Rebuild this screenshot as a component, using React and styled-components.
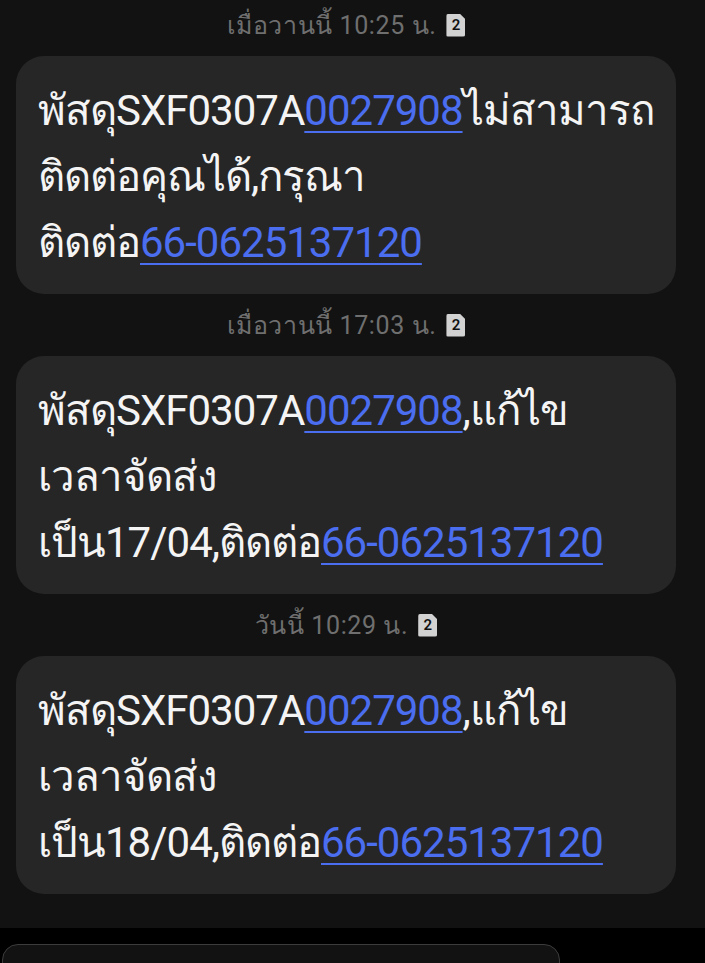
import React from "react";
import styled, { createGlobalStyle } from "styled-components";

const Global = createGlobalStyle`
  html, body { margin: 0; padding: 0; background: #000; }
  body { width: 705px; height: 963px; overflow: hidden; font-family: Roboto, "Noto Sans", "DejaVu Sans", sans-serif; }
`;

const Screen = styled.div`
  width: 705px;
  height: 963px;
  display: flex;
  flex-direction: column;
  background: #000;
  overflow: hidden;
`;

const Thread = styled.div`
  background: #121212;
  height: 928px;
  flex-shrink: 0;
  padding: 8px 29px 0 16px;
  box-sizing: border-box;
  display: flex;
  flex-direction: column;
`;

const Stamp = styled.div`
  height: 34px;
  display: flex;
  align-items: center;
  justify-content: center;
  gap: 10px;
  color: #6f6f6f;
  font-size: 25px;
  letter-spacing: 0.6px;
  margin-bottom: 14px;
`;

const SimBadge = styled.span`
  width: 19px;
  height: 23px;
  background: #d2d2d2;
  color: #111;
  font-size: 15px;
  font-weight: 600;
  letter-spacing: 0;
  display: flex;
  align-items: center;
  justify-content: center;
  border-radius: 2px;
  clip-path: polygon(0 0, 70% 0, 100% 25%, 100% 100%, 0 100%);
`;

const Bubble = styled.div`
  background: #262626;
  border-radius: 28px;
  padding: 22px 22px 18px;
  color: #f4f4f4;
  font-size: 42px;
  letter-spacing: -1px;
  line-height: 66px;
  margin-bottom: 14px;
  height: 238px;
  box-sizing: border-box;
`;

const Line = styled.div`
  white-space: nowrap;
`;

const Link = styled.span`
  color: #4b6ef0;
  text-decoration: underline;
  text-decoration-thickness: 2px;
  text-underline-offset: 6px;
`;

const Composer = styled.div`
  flex: 1;
  padding: 16px 145px 0 2px;
`;

const Input = styled.div`
  height: 60px;
  border: 1px solid #3c3c3c;
  border-radius: 16px;
  background: #121212;
  color: #7a7a7a;
  font-size: 24px;
  padding: 16px 14px;
  box-sizing: border-box;
  white-space: nowrap;
`;

const messages = [
  {
    stamp: "เมื่อวานนี้ 10:25 น.",
    lines: [
      ["พัสดุSXF0307A", { link: "0027908" }, "ไม่สามารถ"],
      ["ติดต่อคุณได้,กรุณา"],
      ["ติดต่อ", { link: "66-0625137120" }],
    ],
  },
  {
    stamp: "เมื่อวานนี้ 17:03 น.",
    lines: [
      ["พัสดุSXF0307A", { link: "0027908" }, ",แก้ไข"],
      ["เวลาจัดส่ง"],
      ["เป็น17/04,ติดต่อ", { link: "66-0625137120" }],
    ],
  },
  {
    stamp: "วันนี้ 10:29 น.",
    lines: [
      ["พัสดุSXF0307A", { link: "0027908" }, ",แก้ไข"],
      ["เวลาจัดส่ง"],
      ["เป็น18/04,ติดต่อ", { link: "66-0625137120" }],
    ],
  },
];

export default function App() {
  return (
    <>
      <Global />
      <Screen>
        <Thread>
          {messages.map((m, i) => (
            <React.Fragment key={i}>
              <Stamp>
                <span>{m.stamp}</span>
                <SimBadge>2</SimBadge>
              </Stamp>
              <Bubble>
                {m.lines.map((l, j) => (
                  <Line key={j}>
                    {l.map((p, k) =>
                      typeof p === "string" ? (
                        <React.Fragment key={k}>{p}</React.Fragment>
                      ) : (
                        <Link key={k}>{p.link}</Link>
                      )
                    )}
                  </Line>
                ))}
              </Bubble>
            </React.Fragment>
          ))}
        </Thread>
        <Composer>
          <Input>ไม่สามารถตอบกลับข้อความนี้ได้</Input>
        </Composer>
      </Screen>
    </>
  );
}
